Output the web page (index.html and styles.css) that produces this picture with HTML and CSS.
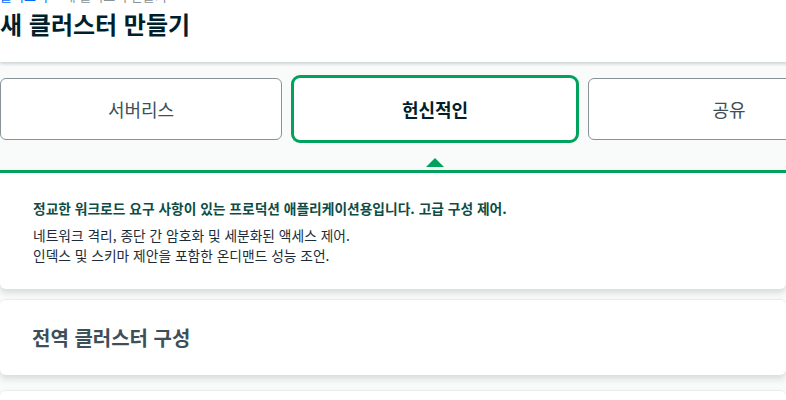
FILE: index.html
```html
<!DOCTYPE html>
<html lang="ko">
<head>
<meta charset="utf-8">
<title>새 클러스터 만들기</title>
<link rel="stylesheet" href="styles.css">
</head>
<body>
<div class="page">
  <header class="header">
    <nav class="crumbs"><a class="crumb-link">클러스터</a><span class="crumb-sep">›</span><span class="crumb-current">새 클러스터 만들기</span></nav>
    <h1 class="title">새 클러스터 만들기</h1>
  </header>
  <main class="main">
    <div class="tiers">
      <div class="tier">서버리스</div>
      <div class="tier tier-selected">헌신적인</div>
      <div class="tier">공유</div>
    </div>
    <section class="tier-info">
      <p class="tier-lead">정교한 워크로드 요구 사항이 있는 프로덕션 애플리케이션용입니다. 고급 구성 제어.</p>
      <p class="tier-desc">네트워크 격리, 종단 간 암호화 및 세분화된 액세스 제어.<br>인덱스 및 스키마 제안을 포함한 온디맨드 성능 조언.</p>
    </section>
    <section class="card">
      <h2 class="card-title">전역 클러스터 구성</h2>
    </section>
    <section class="card card-next"></section>
  </main>
</div>
</body>
</html>
```

FILE: styles.css
```css
html, body {
  margin: 0;
  padding: 0;
}
body {
  background: #f9fbfa;
  font-family: "Noto Sans CJK KR", "Noto Sans", sans-serif;
  color: #1c2d38;
  overflow: hidden;
  width: 786px;
  height: 400px;
}
.page {
  width: 870px;
}
.header {
  display: flow-root;
  background: #ffffff;
  height: 62px;
  box-sizing: border-box;
  box-shadow: 0 2px 3px rgba(0, 30, 43, 0.18);
  position: relative;
  z-index: 1;
}
.crumbs {
  font-size: 13px;
  line-height: 16px;
  margin-top: -12px;
  height: 16px;
  display: flex;
  gap: 6px;
  color: #889397;
}
.crumb-link {
  color: #016bf8;
}
.title {
  margin: 4px 0 0 0;
  font-size: 24px;
  line-height: 32px;
  font-weight: 700;
  color: #001e2b;
}
.main {
  padding-top: 16px;
}
.tiers {
  display: grid;
  grid-template-columns: 282px 282px 282px;
  gap: 12px;
  height: 62px;
}
.tier {
  box-sizing: border-box;
  background: #ffffff;
  border: 1px solid #889397;
  border-radius: 6px;
  display: flex;
  align-items: center;
  justify-content: center;
  font-size: 18px;
  color: #3d4f58;
}
.tier-selected {
  margin: -3px;
  border: 3px solid #00a35c;
  border-radius: 9px;
  font-weight: 700;
  color: #001e2b;
  position: relative;
}
.tier-selected::after {
  content: "";
  position: absolute;
  left: 50%;
  bottom: -27px;
  margin-left: -9px;
  border-left: 9px solid transparent;
  border-right: 9px solid transparent;
  border-bottom: 9px solid #00a35c;
}
.tier-info {
  margin-top: 30px;
  width: 786px;
  box-sizing: border-box;
  background: #ffffff;
  border-top: 3px solid #00a35c;
  border-radius: 0 0 6px 6px;
  box-shadow: 0 4px 6px rgba(0, 30, 43, 0.14);
  padding: 25px 33px 24px;
}
.tier-lead {
  margin: 0 0 7px 0;
  font-size: 13.75px;
  line-height: 20px;
  font-weight: 700;
  color: #0e4d45;
}
.tier-desc {
  margin: 0;
  font-size: 13.75px;
  line-height: 20px;
  color: #1c2d38;
}
.card {
  margin-top: 10px;
  width: 786px;
  height: 76px;
  box-sizing: border-box;
  background: #ffffff;
  border-top: 1px solid #e8edeb;
  border-radius: 6px;
  box-shadow: 0 4px 6px rgba(0, 30, 43, 0.14);
  padding-left: 32px;
  display: flex;
  align-items: center;
}
.card-next {
  margin-top: 15px;
}
.card-title {
  margin: 0;
  font-size: 20px;
  line-height: 26px;
  font-weight: 700;
  color: #3d4f58;
}
```
